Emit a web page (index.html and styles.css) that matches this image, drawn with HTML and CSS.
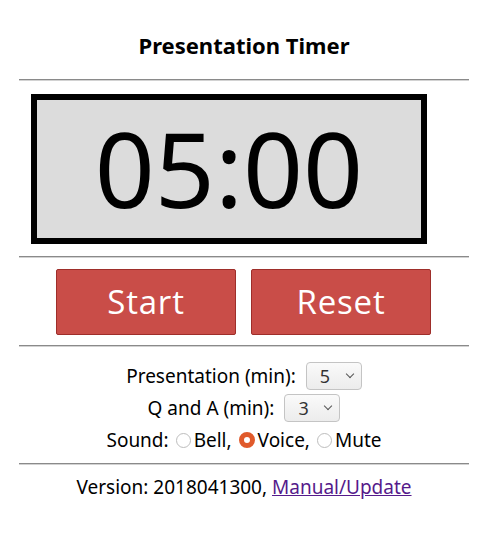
FILE: index.html
```html
<!DOCTYPE html>
<html>
<head>
<meta charset="utf-8">
<link rel="stylesheet" href="styles.css">
</head>
<body>
<div class="page">
  <h1 class="title">Presentation Timer</h1>
  <hr class="rule">
  <div class="timer-wrap"><div class="timer">05:00</div></div>
  <hr class="rule">
  <div class="buttons">
    <button class="btn">Start</button>
    <button class="btn">Reset</button>
  </div>
  <hr class="rule">
  <div class="settings">
    <div class="row">Presentation (min): <span class="select select-p">5<span class="chev"></span></span></div>
    <div class="row">Q and A (min): <span class="select select-q">3<span class="chev"></span></span></div>
    <div class="row">Sound: <label class="opt"><input type="radio" name="s">Bell,</label> <label class="opt"><input type="radio" name="s" checked>Voice,</label> <label class="opt"><input type="radio" name="s">Mute</label></div>
  </div>
  <hr class="rule">
  <div class="version">Version: 2018041300, <a href="#" class="link">Manual/Update</a></div>
</div>
</body>
</html>
```
FILE: styles.css
```css
html, body { margin: 0; padding: 0; background: #fff; }
body { font-family: "Noto Sans", sans-serif; color: #000; }
.page { width: 450px; padding-left: 19px; }
.title { margin: 0; padding-top: 31px; height: 48px; text-align: center; font-family: "Noto Sans", sans-serif; font-weight: 700; font-size: 22px; line-height: 29px; }
.rule { margin: 0; height: 0; border: 0; border-top: 1px solid #8a8a8a; border-bottom: 1px solid #d2d2d2; }
.timer-wrap { padding: 13px 0 12px 12px; }
.timer { box-sizing: border-box; width: 396px; height: 150px; border: 6px solid #000; background: #dcdcdc; font-family: "Noto Sans", sans-serif; font-size: 105px; line-height: 136px; text-align: center; }
.buttons { display: flex; gap: 15px; padding: 11px 0 10px 37px; }
.btn { box-sizing: border-box; width: 180px; height: 66px; margin: 0; padding: 0; background: #c94d48; border: 1px solid #9e2e2a; border-radius: 2px; color: #fff; font-family: "Open Sans", sans-serif; font-size: 33px; letter-spacing: 0.8px; line-height: 62px; }
.settings { padding: 13px 0 7px; text-align: center; font-size: 19px; }
.row { height: 32px; display: flex; justify-content: center; align-items: center; }
.select { box-sizing: border-box; display: inline-flex; align-items: center; justify-content: space-between; width: 56px; height: 28px; margin-left: 10px; padding: 0 8px 0 13px; border: 1px solid #c4c4c4; border-radius: 4px; background: linear-gradient(#fafafa, #ececec); font-size: 18px; color: #333; }
.chev { width: 5px; height: 5px; border-right: 1.5px solid #555; border-bottom: 1.5px solid #555; transform: rotate(45deg); margin-top: -4px; }
.opt { display: inline-flex; align-items: center; margin-left: 7px; }
.opt input { appearance: none; -webkit-appearance: none; box-sizing: border-box; width: 15px; height: 15px; margin: 0 3px 0 0; border: 1px solid #bdbdbd; border-radius: 50%; background: #fff; }
.opt input:checked { width: 16px; height: 16px; border: 5px solid #e05a2b; background: #fff; }
.version { padding-top: 9px; text-align: center; font-size: 19px; }
.link { color: #551a8b; }
```
